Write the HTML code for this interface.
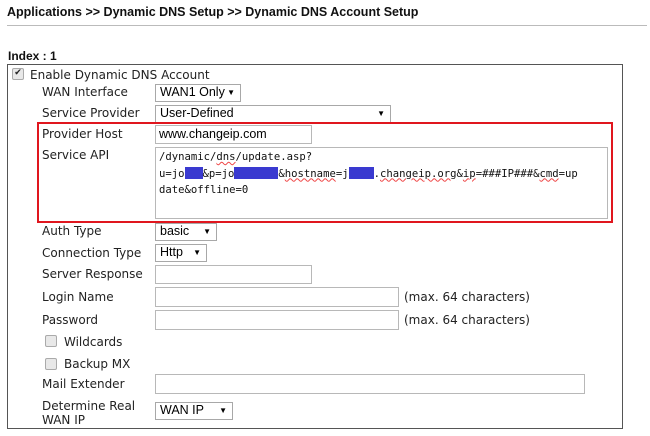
<!DOCTYPE html>
<html><head><meta charset="utf-8"><style>
body{margin:0;width:650px;height:436px;background:#fff;position:relative;overflow:hidden;font-family:"DejaVu Sans",sans-serif;font-size:12px;color:#222}
.a{position:absolute;white-space:nowrap}
.t{font-family:"Liberation Sans",sans-serif;font-weight:bold;font-size:12.5px;color:#111}
.lb{position:absolute;left:42px;font-size:12px;line-height:14px}
.in{position:absolute;border:1px solid #b8b8b8;background:#fff;box-sizing:border-box}
.sel{position:absolute;border:1px solid #a8a8a8;background:#fff;box-sizing:border-box;font-family:"Liberation Sans",sans-serif;font-size:12.5px;padding-left:4px;line-height:15px;color:#000}
.sel b{position:absolute;right:5px;top:0;font-size:8px;font-weight:normal}
.cb{position:absolute;width:10px;height:10px;border:1px solid #aaa;border-radius:2px;background:#e8e8e8}
.mono{font-family:"DejaVu Sans Mono",monospace;font-size:10.6px;line-height:16.5px}
.bl{display:inline-block;background:#3a3ad0;height:12px;vertical-align:-2px}
.u{text-decoration:underline wavy #e44;text-decoration-thickness:1px}
</style></head><body>
<div class="a t" style="left:7px;top:5px">Applications &gt;&gt; Dynamic DNS Setup &gt;&gt; Dynamic DNS Account Setup</div>
<div class="a" style="left:7px;top:25px;width:640px;height:1px;background:#bbb"></div>
<div class="a t" style="left:8px;top:49px;font-size:12px">Index : 1</div>
<div class="a" style="left:7px;top:64px;width:614px;height:363px;border:1px solid #555"></div>
<div class="cb" style="left:12px;top:68px;font-size:9px;line-height:9px;text-align:center">✔</div>
<div class="lb" style="left:30px;top:68px">Enable Dynamic DNS Account</div>
<div class="lb" style="top:85px">WAN Interface</div>
<div class="sel" style="left:155px;top:84px;width:86px;height:18px">WAN1 Only<b>▼</b></div>
<div class="lb" style="top:106px">Service Provider</div>
<div class="sel" style="left:155px;top:105px;width:236px;height:18px">User-Defined<b>▼</b></div>
<div class="a" style="left:37px;top:122px;width:572px;height:97px;border:2px solid #e0161e"></div>
<div class="lb" style="top:127px">Provider Host</div>
<div class="in" style="left:155px;top:125px;width:157px;height:19px;font-family:'Liberation Sans',sans-serif;font-size:12.5px;padding:1px 3px;color:#000">www.changeip.com</div>
<div class="lb" style="top:148px">Service API</div>
<div class="in mono" style="left:155px;top:147px;width:453px;height:72px;padding:1px 3px;color:#111;white-space:nowrap">/dynamic/<span class="u">dns</span>/update.asp?<br>u=jo<span class="bl" style="width:18px"></span>&amp;p=jo<span class="bl" style="width:44px"></span>&amp;<span class="u">hostname</span>=j<span class="bl" style="width:25px"></span>.<span class="u">changeip.org</span>&amp;<span class="u">ip</span>=###IP###&amp;<span class="u">cmd</span>=up<br>date&amp;offline=0</div>
<div class="lb" style="top:224px">Auth Type</div>
<div class="sel" style="left:155px;top:223px;width:62px;height:18px">basic<b>▼</b></div>
<div class="lb" style="top:246px">Connection Type</div>
<div class="sel" style="left:155px;top:244px;width:52px;height:18px">Http<b>▼</b></div>
<div class="lb" style="top:267px">Server Response</div>
<div class="in" style="left:155px;top:265px;width:157px;height:19px"></div>
<div class="lb" style="top:290px">Login Name</div>
<div class="in" style="left:155px;top:287px;width:244px;height:20px"></div>
<div class="lb" style="left:404px;top:290px">(max. 64 characters)</div>
<div class="lb" style="top:313px">Password</div>
<div class="in" style="left:155px;top:310px;width:244px;height:20px"></div>
<div class="lb" style="left:404px;top:313px">(max. 64 characters)</div>
<div class="cb" style="left:45px;top:335px"></div>
<div class="lb" style="left:64px;top:335px">Wildcards</div>
<div class="cb" style="left:45px;top:358px"></div>
<div class="lb" style="left:64px;top:357px">Backup MX</div>
<div class="lb" style="top:377px">Mail Extender</div>
<div class="in" style="left:155px;top:374px;width:430px;height:20px"></div>
<div class="lb" style="top:399px">Determine Real<br>WAN IP</div>
<div class="sel" style="left:155px;top:402px;width:78px;height:18px">WAN IP<b>▼</b></div>
</body></html>
